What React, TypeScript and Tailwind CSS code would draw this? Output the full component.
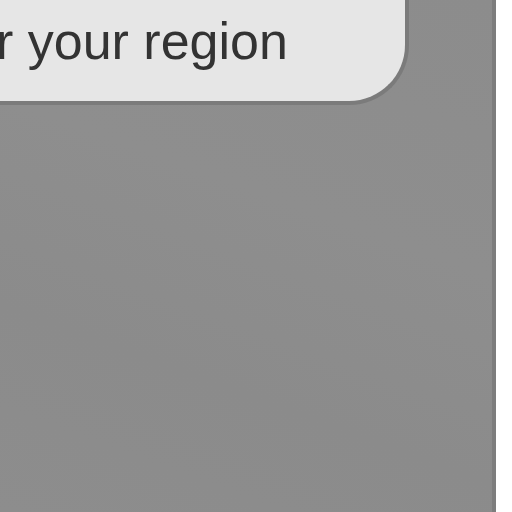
export default function App() {
  return (
    <div className="w-[512px] h-[512px] overflow-hidden bg-white">
      <div className="w-[496px] h-[512px] bg-[#8c8c8c] border-r-4 border-[#7d7d7d] bg-[linear-gradient(200deg,#8c8c8c_0%,#8e8e8e_40%,#8b8b8b_70%,#8d8d8d_100%)]">
        <div className="w-[409px] h-[105px] bg-[#e6e6e6] rounded-br-[60px] border-r-[4px] border-b-[4px] border-[#7b7b7b] overflow-hidden">
          <div
            className="pt-[15px] ml-[-4px] text-[52px] leading-[52px] text-[#333333] whitespace-nowrap"
            style={{ fontFamily: '"Liberation Sans", Arial, sans-serif' }}
          >
            r your region
          </div>
        </div>
      </div>
    </div>
  );
}
